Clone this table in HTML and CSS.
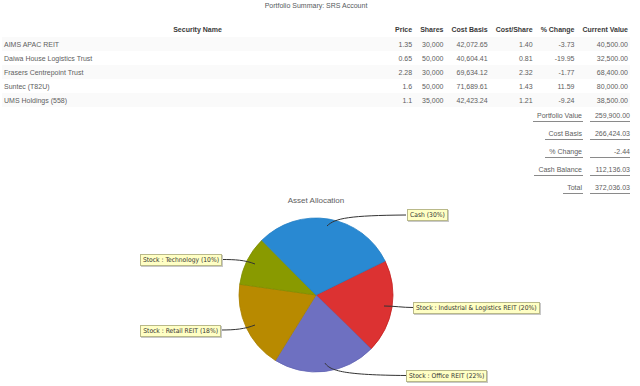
FILE: index.html
```html
<!DOCTYPE html>
<html>
<head>
<meta charset="utf-8">
<title>Portfolio Summary</title>
<link rel="stylesheet" href="styles.css">
</head>
<body>
<div class="page">
  <div class="title">Portfolio Summary: SRS Account</div>
  <table class="holdings">
    <thead>
      <tr><th class="name">Security Name</th><th>Price</th><th>Shares</th><th>Cost Basis</th><th>Cost/Share</th><th>% Change</th><th>Current Value</th></tr>
    </thead>
    <tbody>
      <tr><td class="name">AIMS APAC REIT</td><td>1.35</td><td>30,000</td><td>42,072.65</td><td>1.40</td><td>-3.73</td><td>40,500.00</td></tr>
      <tr><td class="name">Daiwa House Logistics Trust</td><td>0.65</td><td>50,000</td><td>40,604.41</td><td>0.81</td><td>-19.95</td><td>32,500.00</td></tr>
      <tr><td class="name">Frasers Centrepoint Trust</td><td>2.28</td><td>30,000</td><td>69,634.12</td><td>2.32</td><td>-1.77</td><td>68,400.00</td></tr>
      <tr><td class="name">Suntec (T82U)</td><td>1.6</td><td>50,000</td><td>71,689.61</td><td>1.43</td><td>11.59</td><td>80,000.00</td></tr>
      <tr><td class="name">UMS Holdings (558)</td><td>1.1</td><td>35,000</td><td>42,423.24</td><td>1.21</td><td>-9.24</td><td>38,500.00</td></tr>
    </tbody>
  </table>
  <div class="summary">
    <div class="label"><span>Portfolio Value</span></div><div class="value"><span>259,900.00</span></div>
    <div class="label"><span>Cost Basis</span></div><div class="value"><span>266,424.03</span></div>
    <div class="label"><span>% Change</span></div><div class="value"><span>-2.44</span></div>
    <div class="label"><span>Cash Balance</span></div><div class="value"><span>112,136.03</span></div>
    <div class="label"><span>Total</span></div><div class="value"><span>372,036.03</span></div>
  </div>
  <div class="chart">
    <svg class="pie" width="628" height="189" viewBox="2 197 628 189" xmlns="http://www.w3.org/2000/svg">
      <text x="316" y="203" class="chart-title" text-anchor="middle">Asset Allocation</text>
      <g class="slices">
        <path d="M316,295 L385.09,261.00 A77,77 0 0 1 371.02,348.88 Z" fill="#dc3232" stroke="#c41e1e"/>
        <path d="M316,295 L371.02,348.88 A77,77 0 0 1 275.42,360.44 Z" fill="#6e70c1" stroke="#6264b4"/>
        <path d="M316,295 L275.42,360.44 A77,77 0 0 1 239.75,284.28 Z" fill="#b88a00" stroke="#aa8000"/>
        <path d="M316,295 L239.75,284.28 A77,77 0 0 1 261.84,240.27 Z" fill="#899a00" stroke="#7e8e00"/>
        <path d="M316,295 L261.84,240.27 A77,77 0 0 1 385.09,261.00 Z" fill="#2989d2" stroke="#237fc4"/>
      </g>
      <g class="leaders" fill="none" stroke="#333" stroke-width="1">
        <path d="M327,226 C335,218 350,215.5 406,215"/>
        <path d="M384,306 C395,306 402,307.5 413,307.5"/>
        <path d="M325,363 C330,371 345,375 406,375.5"/>
        <path d="M255,264 C245,260 235,259.5 222,259.5"/>
        <path d="M255,325 C245,329 235,330 221,330"/>
      </g>
    </svg>
    <div class="tag tag-cash">Cash (30%)</div>
    <div class="tag tag-ind">Stock : Industrial &amp; Logistics REIT (20%)</div>
    <div class="tag tag-off">Stock : Office REIT (22%)</div>
    <div class="tag tag-tech">Stock : Technology (10%)</div>
    <div class="tag tag-ret">Stock : Retail REIT (18%)</div>
  </div>
</div>
</body>
</html>
```
FILE: styles.css
```css
html, body {
  margin: 0;
  padding: 0;
  background: #ffffff;
}
body {
  font-family: "Liberation Sans", Arial, sans-serif;
  color: #606060;
}
.page {
  padding: 0 10px 0 2px;
  width: 628px;
}
.title {
  height: 12px;
  line-height: 12px;
  font-size: 7px;
  text-align: center;
  color: #555a60;
  margin-bottom: 10px;
}
.holdings {
  width: 100%;
  border-collapse: collapse;
  font-size: 7px;
}
.holdings th {
  height: 15px;
  padding: 0 2px 0 6px;
  font-weight: bold;
  color: #3a3a3a;
  text-align: right;
  white-space: nowrap;
  width: 1%;
  vertical-align: middle;
}
.holdings th.name {
  width: auto;
  text-align: center;
}
.holdings td {
  height: 14px;
  padding: 0 2px 0 6px;
  text-align: right;
  white-space: nowrap;
  color: #606060;
  vertical-align: middle;
}
.holdings td.name {
  text-align: left;
  padding-left: 2px;
}
.holdings tbody tr:nth-child(odd) {
  background: #fafafa;
}
.summary {
  display: grid;
  grid-template-columns: auto auto;
  justify-content: end;
  column-gap: 7px;
  font-size: 7px;
  color: #606060;
}
.summary .label,
.summary .value {
  height: 18px;
  box-sizing: border-box;
  padding-top: 5px;
  text-align: right;
}
.summary span {
  display: inline-block;
  line-height: 8px;
  padding: 0 1px 1px 4px;
  border-bottom: 1px solid #8a8a8a;
}
.summary .value span {
  min-width: 40px;
  padding: 0 0 1px 0;
  text-align: right;
}
.chart {
  position: relative;
  width: 628px;
  height: 189px;
}
.pie {
  display: block;
}
.chart-title {
  font-family: "Liberation Sans", Arial, sans-serif;
  font-size: 8px;
  fill: #606060;
}
.slices path {
  stroke-width: 0.8;
}
.tag {
  position: absolute;
  font-family: "DejaVu Sans Condensed", "DejaVu Sans", sans-serif;
  font-stretch: condensed;
  font-size: 6.7px;
  line-height: 8px;
  padding: 1px 2px 1px 2px;
  color: #333333;
  background: #ffffc4;
  border: 1px solid #b9b98a;
  box-shadow: 1px 1px 0 #c8c8c8;
  white-space: nowrap;
}
.tag-cash { left: 405px; top: 12px; }
.tag-ind { left: 411px; top: 105px; }
.tag-off { left: 404px; top: 173px; }
.tag-tech { right: 408px; top: 57px; }
.tag-ret { right: 409px; top: 128px; }
```
